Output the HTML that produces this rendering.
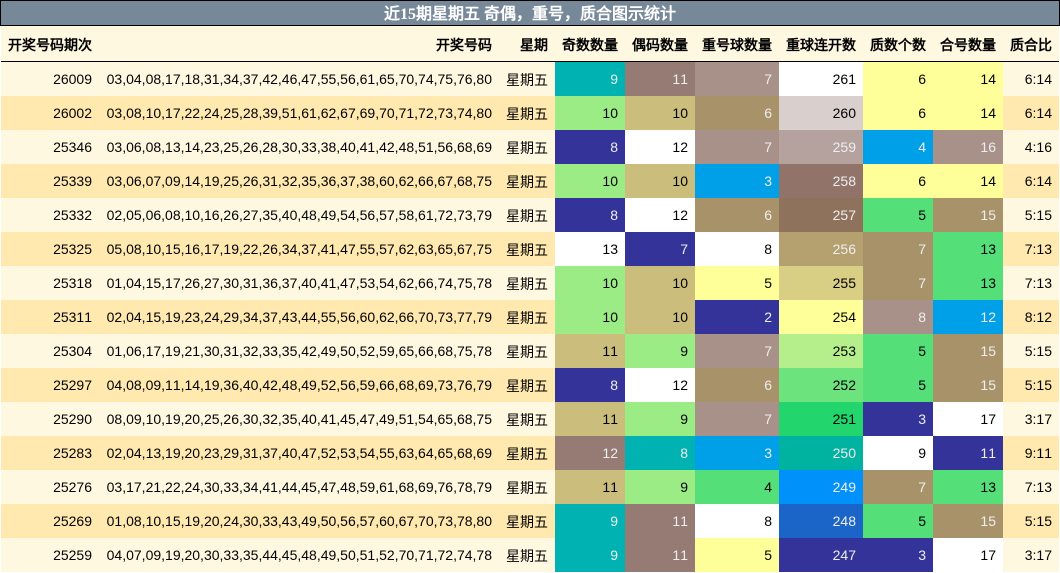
<!DOCTYPE html>
<html lang="zh">
<head>
<meta charset="utf-8">
<style>
html,body{margin:0;padding:0;width:1060px;height:573px;overflow:hidden;background:#fff}
body{font-family:"Liberation Sans","WenQuanYi Zen Hei",sans-serif;font-size:14px;color:#000;font-kerning:none;text-rendering:optimizeSpeed}
.title{position:absolute;left:0;top:0;width:1058px;height:24px;border:1px solid #000;background:#778899;color:#fff;text-align:center;font:bold 16px/28px "Liberation Serif","WenQuanYi Zen Hei",serif;font-kerning:none;overflow:hidden}
table{position:absolute;left:1px;top:26px;width:1058px;border-collapse:separate;border-spacing:0;table-layout:fixed}
th,td{padding:0 7px 0 0;text-align:right;white-space:nowrap;overflow:hidden;font-weight:normal}
th{height:33px;padding-top:2px;background:#FFF8E1;font-weight:bold;border-bottom:1px solid #000;color:#000}
td{height:34px}
td.c{height:32px;padding-top:2px}
tr.o td{background:#FFF8E1}
tr.e td{background:#FFE9AF}
tr td.T{background:#00B2B2;color:#eee}
tr td.B{background:#967A74;color:#eee}
tr td.M{background:#A89189;color:#eee}
tr td.A{background:#A8926A;color:#eee}
tr td.K{background:#CBBD7B}
tr td.G{background:#9BEC85}
tr td.N{background:#333399;color:#eee}
tr td.W{background:#fff}
tr td.Y{background:#FFFF99}
tr td.L{background:#00A0E8;color:#eee}
tr td.E{background:#54DF78}
</style>
</head>
<body>
<div class="title">近15期星期五 奇偶，重号，质合图示统计</div>
<table>
<colgroup><col style="width:98px"><col style="width:400px"><col style="width:56px"><col style="width:70px"><col style="width:70px"><col style="width:84px"><col style="width:84px"><col style="width:70px"><col style="width:70px"><col style="width:56px"></colgroup>
<tr><th>开奖号码期次</th><th>开奖号码</th><th>星期</th><th>奇数数量</th><th>偶码数量</th><th>重号球数量</th><th>重球连开数</th><th>质数个数</th><th>合号数量</th><th>质合比</th></tr>
<tr class="o"><td>26009</td><td>03,04,08,17,18,31,34,37,42,46,47,55,56,61,65,70,74,75,76,80</td><td class="c">星期五</td><td class="T">9</td><td class="B">11</td><td class="M">7</td><td class="W">261</td><td class="Y">6</td><td class="Y">14</td><td>6:14</td></tr>
<tr class="e"><td>26002</td><td>03,08,10,17,22,24,25,28,39,51,61,62,67,69,70,71,72,73,74,80</td><td class="c">星期五</td><td class="G">10</td><td class="K">10</td><td class="A">6</td><td style="background:#D9CFCD">260</td><td class="Y">6</td><td class="Y">14</td><td>6:14</td></tr>
<tr class="o"><td>25346</td><td>03,06,08,13,14,23,25,26,28,30,33,38,40,41,42,48,51,56,68,69</td><td class="c">星期五</td><td class="N">8</td><td class="W">12</td><td class="M">7</td><td style="background:#B5A19D;color:#eee">259</td><td class="L">4</td><td class="M">16</td><td>4:16</td></tr>
<tr class="e"><td>25339</td><td>03,06,07,09,14,19,25,26,31,32,35,36,37,38,60,62,66,67,68,75</td><td class="c">星期五</td><td class="G">10</td><td class="K">10</td><td class="L">3</td><td style="background:#91736A;color:#eee">258</td><td class="Y">6</td><td class="Y">14</td><td>6:14</td></tr>
<tr class="o"><td>25332</td><td>02,05,06,08,10,16,26,27,35,40,48,49,54,56,57,58,61,72,73,79</td><td class="c">星期五</td><td class="N">8</td><td class="W">12</td><td class="A">6</td><td style="background:#8F725B;color:#eee">257</td><td class="E">5</td><td class="A">15</td><td>5:15</td></tr>
<tr class="e"><td>25325</td><td>05,08,10,15,16,17,19,22,26,34,37,41,47,55,57,62,63,65,67,75</td><td class="c">星期五</td><td class="W">13</td><td class="N">7</td><td class="W">8</td><td style="background:#B5A06F;color:#eee">256</td><td class="A">7</td><td class="E">13</td><td>7:13</td></tr>
<tr class="o"><td>25318</td><td>01,04,15,17,26,27,30,31,36,37,40,41,47,53,54,62,66,74,75,78</td><td class="c">星期五</td><td class="G">10</td><td class="K">10</td><td class="Y">5</td><td style="background:#D9CF84">255</td><td class="A">7</td><td class="E">13</td><td>7:13</td></tr>
<tr class="e"><td>25311</td><td>02,04,15,19,23,24,29,34,37,43,44,55,56,60,62,66,70,73,77,79</td><td class="c">星期五</td><td class="G">10</td><td class="K">10</td><td class="N">2</td><td class="Y">254</td><td class="M">8</td><td class="L">12</td><td>8:12</td></tr>
<tr class="o"><td>25304</td><td>01,06,17,19,21,30,31,32,33,35,42,49,50,52,59,65,66,68,75,78</td><td class="c">星期五</td><td class="K">11</td><td class="G">9</td><td class="M">7</td><td style="background:#B5EF8B">253</td><td class="E">5</td><td class="A">15</td><td>5:15</td></tr>
<tr class="e"><td>25297</td><td>04,08,09,11,14,19,36,40,42,48,49,52,56,59,66,68,69,73,76,79</td><td class="c">星期五</td><td class="N">8</td><td class="W">12</td><td class="A">6</td><td style="background:#6CE37D">252</td><td class="E">5</td><td class="A">15</td><td>5:15</td></tr>
<tr class="o"><td>25290</td><td>08,09,10,19,20,25,26,30,32,35,40,41,45,47,49,51,54,65,68,75</td><td class="c">星期五</td><td class="K">11</td><td class="G">9</td><td class="M">7</td><td style="background:#22D56D">251</td><td class="N">3</td><td class="W">17</td><td>3:17</td></tr>
<tr class="e"><td>25283</td><td>02,04,13,19,20,23,29,31,37,40,47,52,53,54,55,63,64,65,68,69</td><td class="c">星期五</td><td class="B">12</td><td class="T">8</td><td class="L">3</td><td style="background:#00B2A0;color:#eee">250</td><td class="W">9</td><td class="N">11</td><td>9:11</td></tr>
<tr class="o"><td>25276</td><td>03,17,21,22,24,30,33,34,41,44,45,47,48,59,61,68,69,76,78,79</td><td class="c">星期五</td><td class="K">11</td><td class="G">9</td><td class="E">4</td><td style="background:#0091FA;color:#eee">249</td><td class="A">7</td><td class="E">13</td><td>7:13</td></tr>
<tr class="e"><td>25269</td><td>01,08,10,15,19,20,24,30,33,43,49,50,56,57,60,67,70,73,78,80</td><td class="c">星期五</td><td class="T">9</td><td class="B">11</td><td class="W">8</td><td style="background:#1B65C8;color:#eee">248</td><td class="E">5</td><td class="A">15</td><td>5:15</td></tr>
<tr class="o"><td>25259</td><td>04,07,09,19,20,30,33,35,44,45,48,49,50,51,52,70,71,72,74,78</td><td class="c">星期五</td><td class="T">9</td><td class="B">11</td><td class="Y">5</td><td class="N">247</td><td class="N">3</td><td class="W">17</td><td>3:17</td></tr>
</table>
</body>
</html>
